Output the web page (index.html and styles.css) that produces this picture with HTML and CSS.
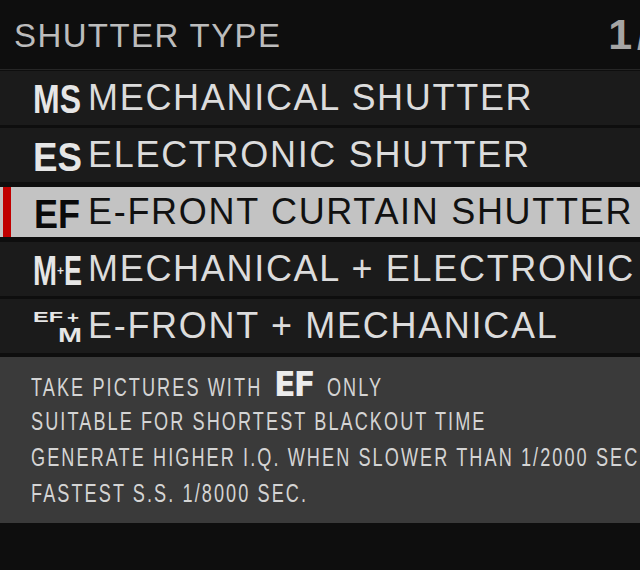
FILE: index.html
```html
<!DOCTYPE html>
<html>
<head>
<meta charset="utf-8">
<link rel="stylesheet" href="styles.css">
</head>
<body>
<div class="screen">
  <div class="header">
    <span class="title">SHUTTER TYPE</span>
    <span class="page">1/</span>
  </div>
  <div class="list">
    <div class="row">
      <svg class="icon" viewBox="0 0 55 54" width="55" height="54"><text x="0" y="42" font-size="41" textLength="48" lengthAdjust="spacingAndGlyphs">MS</text></svg>
      <span class="label">MECHANICAL SHUTTER</span>
    </div>
    <div class="row">
      <svg class="icon" viewBox="0 0 55 54" width="55" height="54"><text x="0" y="43" font-size="41" textLength="49" lengthAdjust="spacingAndGlyphs">ES</text></svg>
      <span class="label">ELECTRONIC SHUTTER</span>
    </div>
    <div class="row selected">
      <svg class="icon" viewBox="0 0 55 54" width="55" height="54"><text x="1" y="43" font-size="41.5" textLength="46" lengthAdjust="spacingAndGlyphs">EF</text></svg>
      <span class="label">E-FRONT CURTAIN SHUTTER</span>
    </div>
    <div class="row">
      <svg class="icon" viewBox="0 0 55 54" width="55" height="54"><text x="0" y="43" font-size="43" textLength="24" lengthAdjust="spacingAndGlyphs">M</text><text x="24" y="33" font-size="12" textLength="7" lengthAdjust="spacingAndGlyphs">+</text><text x="31" y="43" font-size="43" textLength="18" lengthAdjust="spacingAndGlyphs">E</text></svg>
      <span class="label">MECHANICAL + ELECTRONIC</span>
    </div>
    <div class="row">
      <svg class="icon" viewBox="0 0 55 54" width="55" height="54"><text x="0" y="23" font-size="15" textLength="30" lengthAdjust="spacingAndGlyphs">EF</text><text x="34" y="24" font-size="17" textLength="12" lengthAdjust="spacingAndGlyphs">+</text><text x="25" y="43" font-size="21" textLength="24" lengthAdjust="spacingAndGlyphs">M</text></svg>
      <span class="label">E-FRONT + MECHANICAL</span>
    </div>
  </div>
  <div class="desc">
    <div class="desc-text">
      <div class="line">TAKE PICTURES WITH <span class="ef">EF</span> ONLY</div>
      <div class="line">SUITABLE FOR SHORTEST BLACKOUT TIME</div>
      <div class="line">GENERATE HIGHER I.Q. WHEN SLOWER THAN 1/2000 SEC</div>
      <div class="line">FASTEST S.S. 1/8000 SEC.</div>
    </div>
  </div>
</div>
</body>
</html>
```

FILE: styles.css
```css
html, body {
  margin: 0;
  padding: 0;
  background: #0e0e0e;
}
.screen {
  width: 640px;
  height: 570px;
  overflow: hidden;
  background: #0e0e0e;
  font-family: "Liberation Sans", Arial, sans-serif;
}
.header {
  height: 70px;
  display: flex;
  align-items: center;
  justify-content: space-between;
  padding-left: 14px;
  border-bottom: 1px solid #262626;
  box-sizing: border-box;
  white-space: nowrap;
  overflow: hidden;
}
.title {
  font-size: 33px;
  letter-spacing: 1.4px;
  color: #bcbcbc;
  line-height: 1;
  padding-top: 2px;
}
.page {
  font-size: 43px;
  font-weight: bold;
  color: #a5a5a5;
  letter-spacing: 5px;
  margin-right: -14px;
  line-height: 1;
}
.list {
  display: flex;
  flex-direction: column;
  gap: 3px;
  padding-top: 1px;
}
.row {
  height: 54px;
  background: #1b1b1b;
  display: flex;
  align-items: center;
  padding-left: 33px;
  white-space: nowrap;
  overflow: hidden;
  position: relative;
  color: #dcdcdc;
}
.row.selected {
  background: #c3c3c3;
  color: #111;
  height: 50px;
  margin: 2px 0;
}
.row.selected::before {
  content: "";
  position: absolute;
  left: 3px;
  top: 0;
  bottom: 0;
  width: 8px;
  background: #c00000;
}
.icon {
  flex: none;
  display: block;
  overflow: visible;
  font-family: "Liberation Sans", Arial, sans-serif;
  font-weight: bold;
  fill: #e6e6e6;
}
.selected .icon { fill: #0a0a0a; }
.label {
  font-size: 36px;
  letter-spacing: 1.7px;
  line-height: 1;
}
.desc {
  margin-top: 4px;
  height: 166px;
  background: #3a3a3a;
  box-sizing: border-box;
  padding: 10px 0 0 31px;
  overflow: hidden;
}
.desc-text {
  width: 900px;
  transform: scaleX(0.696);
  transform-origin: 0 0;
  white-space: nowrap;
  font-family: "Liberation Sans", Arial, sans-serif;
  font-size: 26px;
  letter-spacing: 3px;
  color: #d4d4d4;
}
.line {
  height: 36px;
  line-height: 36px;
}
.desc .ef {
  display: inline-block;
  font-family: "DejaVu Sans", sans-serif;
  font-weight: bold;
  font-size: 34px;
  letter-spacing: -2px;
  line-height: 1;
  color: #ececec;
  transform: scaleX(1.34);
  transform-origin: 0 50%;
  margin-left: 6px;
  margin-right: 24px;
}
```
